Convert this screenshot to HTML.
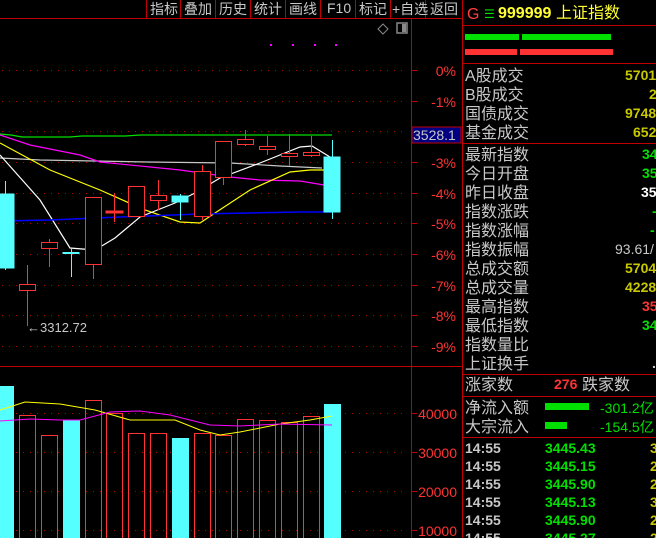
<!DOCTYPE html>
<html><head><meta charset="utf-8"><style>
html,body{margin:0;padding:0;background:#000;width:656px;height:538px;overflow:hidden}
svg{display:block}
text{font-family:"Liberation Sans","Noto Sans CJK SC",sans-serif}
.l{fill:#c8c8c8;font-size:16px}
.v{font-size:14px;font-weight:bold}
</style></head><body>
<svg width="656" height="538" viewBox="0 0 656 538" xmlns="http://www.w3.org/2000/svg">
<rect width="656" height="538" fill="#000"/>
<g stroke="#c00000" stroke-width="1">
<line x1="0" y1="18.5" x2="462" y2="18.5"/>
<line x1="146.5" y1="0" x2="146.5" y2="18"/><line x1="180.5" y1="0" x2="180.5" y2="18"/>
<line x1="215.5" y1="0" x2="215.5" y2="18"/><line x1="250.5" y1="0" x2="250.5" y2="18"/>
<line x1="285.5" y1="0" x2="285.5" y2="18"/><line x1="320.5" y1="0" x2="320.5" y2="18"/>
<line x1="355.5" y1="0" x2="355.5" y2="18"/><line x1="390.5" y1="0" x2="390.5" y2="18"/>
<line x1="425.5" y1="0" x2="425.5" y2="18"/>
<line x1="411.5" y1="18" x2="411.5" y2="538"/>
<line x1="0" y1="366.5" x2="462" y2="366.5"/>
<line x1="462.5" y1="0" x2="462.5" y2="538"/>
</g>
<g fill="#c8c8c8" font-size="14">
<text x="150" y="14">指标</text><text x="184" y="14">叠加</text><text x="219" y="14">历史</text>
<text x="254" y="14">统计</text><text x="289" y="14">画线</text><text x="327" y="13">F10</text>
<text x="359" y="14">标记</text><text x="392" y="14">+自选</text><text x="430" y="14">返回</text>
</g>
<path d="M383 24 l5 5 l-5 5 l-5 -5z" fill="none" stroke="#888" stroke-width="1"/>
<rect x="397" y="23" width="10" height="10" fill="none" stroke="#888" stroke-width="1.5"/>
<rect x="402" y="24" width="4" height="8" fill="#888"/>
<g fill="#ff00ff"><rect x="270" y="44" width="2" height="2"/><rect x="292" y="44" width="2" height="2"/><rect x="314" y="44" width="2" height="2"/><rect x="335" y="44" width="2" height="2"/></g>
<g stroke="#b00000" stroke-dasharray="1,6" stroke-width="1">
<line x1="2" y1="70.5" x2="408" y2="70.5"/><line x1="2" y1="101.5" x2="408" y2="101.5"/>
<line x1="2" y1="131.5" x2="408" y2="131.5"/><line x1="2" y1="162.5" x2="408" y2="162.5"/>
<line x1="2" y1="193.5" x2="408" y2="193.5"/><line x1="2" y1="223.5" x2="408" y2="223.5"/>
<line x1="2" y1="254.5" x2="408" y2="254.5"/><line x1="2" y1="285.5" x2="408" y2="285.5"/>
<line x1="2" y1="315.5" x2="408" y2="315.5"/><line x1="2" y1="346.5" x2="408" y2="346.5"/>
<line x1="2" y1="413.5" x2="408" y2="413.5"/><line x1="2" y1="452.5" x2="408" y2="452.5"/>
<line x1="2" y1="491.5" x2="408" y2="491.5"/><line x1="2" y1="530.5" x2="408" y2="530.5"/>
</g>
<g stroke="#c00000"><line x1="411" y1="70.5" x2="417" y2="70.5"/><line x1="411" y1="101.5" x2="417" y2="101.5"/><line x1="411" y1="162.5" x2="417" y2="162.5"/><line x1="411" y1="193.5" x2="417" y2="193.5"/><line x1="411" y1="223.5" x2="417" y2="223.5"/><line x1="411" y1="254.5" x2="417" y2="254.5"/><line x1="411" y1="285.5" x2="417" y2="285.5"/><line x1="411" y1="315.5" x2="417" y2="315.5"/><line x1="411" y1="346.5" x2="417" y2="346.5"/><line x1="411" y1="413.5" x2="417" y2="413.5"/><line x1="411" y1="452.5" x2="417" y2="452.5"/><line x1="411" y1="491.5" x2="417" y2="491.5"/><line x1="411" y1="530.5" x2="417" y2="530.5"/></g>
<g fill="#ff3333" font-size="14" text-anchor="end">
<text x="456" y="76">0%</text><text x="456" y="107">-1%</text><text x="456" y="168">-3%</text>
<text x="456" y="199">-4%</text><text x="456" y="229">-5%</text><text x="456" y="260">-6%</text>
<text x="456" y="291">-7%</text><text x="456" y="321">-8%</text><text x="456" y="352">-9%</text>
<text x="457" y="419">40000</text><text x="457" y="458">30000</text><text x="457" y="497">20000</text><text x="457" y="536">10000</text>
</g>
<rect x="412" y="127" width="49" height="16" fill="#000080" stroke="#c00000"/>
<text x="413" y="140" fill="#c8c8c8" font-size="14">3528.1</text>
<g fill="none" stroke-width="1.2">
<polyline stroke="#00e000" points="0,134 11,135 22,137 70,137 82,136 125,136 140,135 332,135"/>
<polyline stroke="#c8c8c8" points="0,158 40,160 147,162 230,163 280,166 322,168"/>
<polyline stroke="#ff00ff" points="0,135 30,145 80,155 100,162 180,170 230,177 260,180 300,181 330,186"/>
<polyline stroke="#ffff00" points="0,143 50,170 100,190 145,210 180,222 200,223 215,213 250,190 290,172 310,170 330,170"/>
<polyline stroke="#ffffff" points="0,155 40,200 70,248 95,250 115,238 140,217 175,203 195,193 220,178 260,163 300,147 312,146 330,157"/>
<polyline stroke="#0000ff" stroke-width="1.5" points="0,221 50,220 120,217 200,214 300,212 332,212"/>
</g>
<g stroke="#ff3333" fill="none" stroke-width="1">
<line x1="27.5" y1="265" x2="27.5" y2="326"/><rect x="19.5" y="284.5" width="16" height="6" fill="#000"/>
<line x1="49.5" y1="239" x2="49.5" y2="267"/><rect x="41.5" y="242.5" width="16" height="6" fill="#000"/>
<line x1="93.5" y1="265" x2="93.5" y2="279"/><rect x="85.5" y="197.5" width="16" height="67" fill="#000"/>
<line x1="114.5" y1="193" x2="114.5" y2="222"/><rect x="106" y="211" width="17" height="2" fill="#ff3333"/>
<rect x="128.5" y="186.5" width="16" height="30" fill="#000"/>
<line x1="158.5" y1="180" x2="158.5" y2="210"/><rect x="150.5" y="195.5" width="16" height="5" fill="#000"/>
<line x1="202.5" y1="165" x2="202.5" y2="220"/><rect x="194.5" y="171.5" width="16" height="45" fill="#000"/>
<line x1="223.5" y1="177" x2="223.5" y2="185"/><rect x="215.5" y="141.5" width="16" height="36" fill="#000"/>
<line x1="245.5" y1="130" x2="245.5" y2="146"/><rect x="237.5" y="139.5" width="16" height="5" fill="#000"/>
<line x1="267.5" y1="136" x2="267.5" y2="155"/><rect x="259.5" y="146.5" width="16" height="3" fill="#000"/>
<line x1="289.5" y1="134" x2="289.5" y2="166"/><rect x="281.5" y="153.5" width="16" height="3" fill="#000"/>
<line x1="311.5" y1="136" x2="311.5" y2="157"/><rect x="303.5" y="152.5" width="16" height="3" fill="#000"/>
</g>
<g stroke="#55ffff" fill="#55ffff">
<line x1="5.5" y1="181" x2="5.5" y2="270"/><rect x="0" y="194" width="14" height="74"/>
<line x1="71.5" y1="248" x2="71.5" y2="277"/><rect x="63" y="252.5" width="16" height="1" />
<line x1="180.5" y1="194" x2="180.5" y2="220"/><rect x="172" y="196" width="16" height="6"/>
<line x1="332.5" y1="140" x2="332.5" y2="219"/><rect x="324" y="157" width="16" height="55"/>
</g>
<text x="27" y="332" fill="#c8c8c8" font-size="13">←3312.72</text>
<g fill="#55ffff"><rect x="0" y="386" width="14" height="152"/><rect x="63" y="420" width="17" height="118"/><rect x="172" y="438" width="17" height="100"/><rect x="324" y="404" width="17" height="134"/></g>
<g fill="none" stroke="#ff3333">
<rect x="19.5" y="415.5" width="16" height="130"/><rect x="41.5" y="435.5" width="16" height="110"/>
<rect x="85.5" y="400.5" width="16" height="140"/><rect x="106.5" y="413.5" width="16" height="130"/>
<rect x="128.5" y="433.5" width="16" height="110"/><rect x="150.5" y="433.5" width="16" height="110"/>
<rect x="194.5" y="433.5" width="16" height="110"/><rect x="215.5" y="435.5" width="16" height="110"/>
<rect x="237.5" y="419.5" width="16" height="130"/><rect x="259.5" y="420.5" width="16" height="130"/>
<rect x="281.5" y="422.5" width="16" height="130"/><rect x="303.5" y="416.5" width="16" height="130"/>
</g>
<polyline fill="none" stroke="#ffff00" points="0,410 25,402 60,404 95,410 130,420 175,420 200,430 220,435 240,432 280,424 310,420 332,416"/>
<polyline fill="none" stroke="#ff00ff" points="0,421 30,419 60,420 80,420 110,412 140,411 170,415 210,425 240,426 280,424 332,425"/>
<g stroke="#c00000"><line x1="462" y1="25.5" x2="656" y2="25.5"/><line x1="462" y1="63.5" x2="656" y2="63.5"/><line x1="462" y1="143.5" x2="656" y2="143.5"/><line x1="462" y1="374.5" x2="656" y2="374.5"/><line x1="462" y1="396.5" x2="656" y2="396.5"/><line x1="462" y1="437.5" x2="656" y2="437.5"/></g>
<text x="467" y="19" fill="#ff4040" font-size="16">G</text>
<text x="484" y="18" fill="#00e000" font-size="12">☰</text>
<text x="498" y="18" fill="#ffff33" font-size="16" font-weight="bold">999999</text>
<text x="556" y="18" fill="#ffff33" font-size="16">上证指数</text>
<rect x="465" y="34" width="54" height="6" fill="#00e000"/><rect x="522" y="34" width="89" height="6" fill="#00e000"/>
<rect x="465" y="49" width="52" height="6" fill="#ff3333"/><rect x="520" y="49" width="93" height="6" fill="#ff3333"/>
<g class="l">
<text x="465" y="81">A股成交</text><text x="465" y="100">B股成交</text><text x="465" y="119">国债成交</text><text x="465" y="138">基金成交</text>
<text x="465" y="160">最新指数</text><text x="465" y="179">今日开盘</text><text x="465" y="198">昨日收盘</text><text x="465" y="217">指数涨跌</text>
<text x="465" y="236">指数涨幅</text><text x="465" y="255">指数振幅</text><text x="465" y="274">总成交额</text><text x="465" y="293">总成交量</text>
<text x="465" y="312">最高指数</text><text x="465" y="331">最低指数</text><text x="465" y="350">指数量比</text><text x="465" y="369">上证换手</text>
<text x="465" y="390">涨家数</text><text x="582" y="390">跌家数</text>
<text x="465" y="413">净流入额</text><text x="465" y="432">大宗流入</text>
</g>
<g class="v">
<text x="625" y="80" fill="#c8c800">5701</text><text x="649" y="99" fill="#c8c800">2</text>
<text x="625" y="118" fill="#c8c800">9748</text><text x="633" y="137" fill="#c8c800">652</text>
<text x="642" y="159" fill="#00e000">34</text><text x="642" y="178" fill="#00e000">35</text>
<text x="641" y="197" fill="#ffffff">35</text><text x="652" y="216" fill="#00e000">-</text>
<text x="650" y="235" fill="#00e000">-</text><text x="615" y="254" fill="#c8c8c8" font-weight="normal">93.61/</text>
<text x="625" y="273" fill="#c8c800">5704</text><text x="625" y="292" fill="#c8c800">4228</text>
<text x="642" y="311" fill="#ff3333">35</text><text x="642" y="330" fill="#00e000">34</text>
<text x="652" y="368" fill="#c8c8c8">.</text>
<text x="554" y="389" fill="#ff3333">276</text>
</g>
<rect x="545" y="403" width="44" height="7" fill="#00e000"/><rect x="545" y="422" width="22" height="7" fill="#00e000"/>
<text x="600" y="413" fill="#00e000" font-size="14">-301.2亿</text>
<text x="600" y="432" fill="#00e000" font-size="14">-154.5亿</text>
<g font-size="14" font-weight="bold">
<g fill="#c8c8c8"><text x="465" y="453">14:55</text><text x="465" y="471">14:55</text><text x="465" y="489">14:55</text><text x="465" y="507">14:55</text><text x="465" y="525">14:55</text><text x="465" y="543">14:55</text></g>
<g fill="#00e000"><text x="545" y="453">3445.43</text><text x="545" y="471">3445.15</text><text x="545" y="489">3445.90</text><text x="545" y="507">3445.13</text><text x="545" y="525">3445.90</text><text x="545" y="543">3445.27</text></g>
<g fill="#c8c800"><text x="650" y="453">3</text><text x="650" y="471">2</text><text x="650" y="489">2</text><text x="650" y="507">3</text><text x="650" y="525">2</text><text x="650" y="543">2</text></g>
</g>
</svg>
</body></html>
